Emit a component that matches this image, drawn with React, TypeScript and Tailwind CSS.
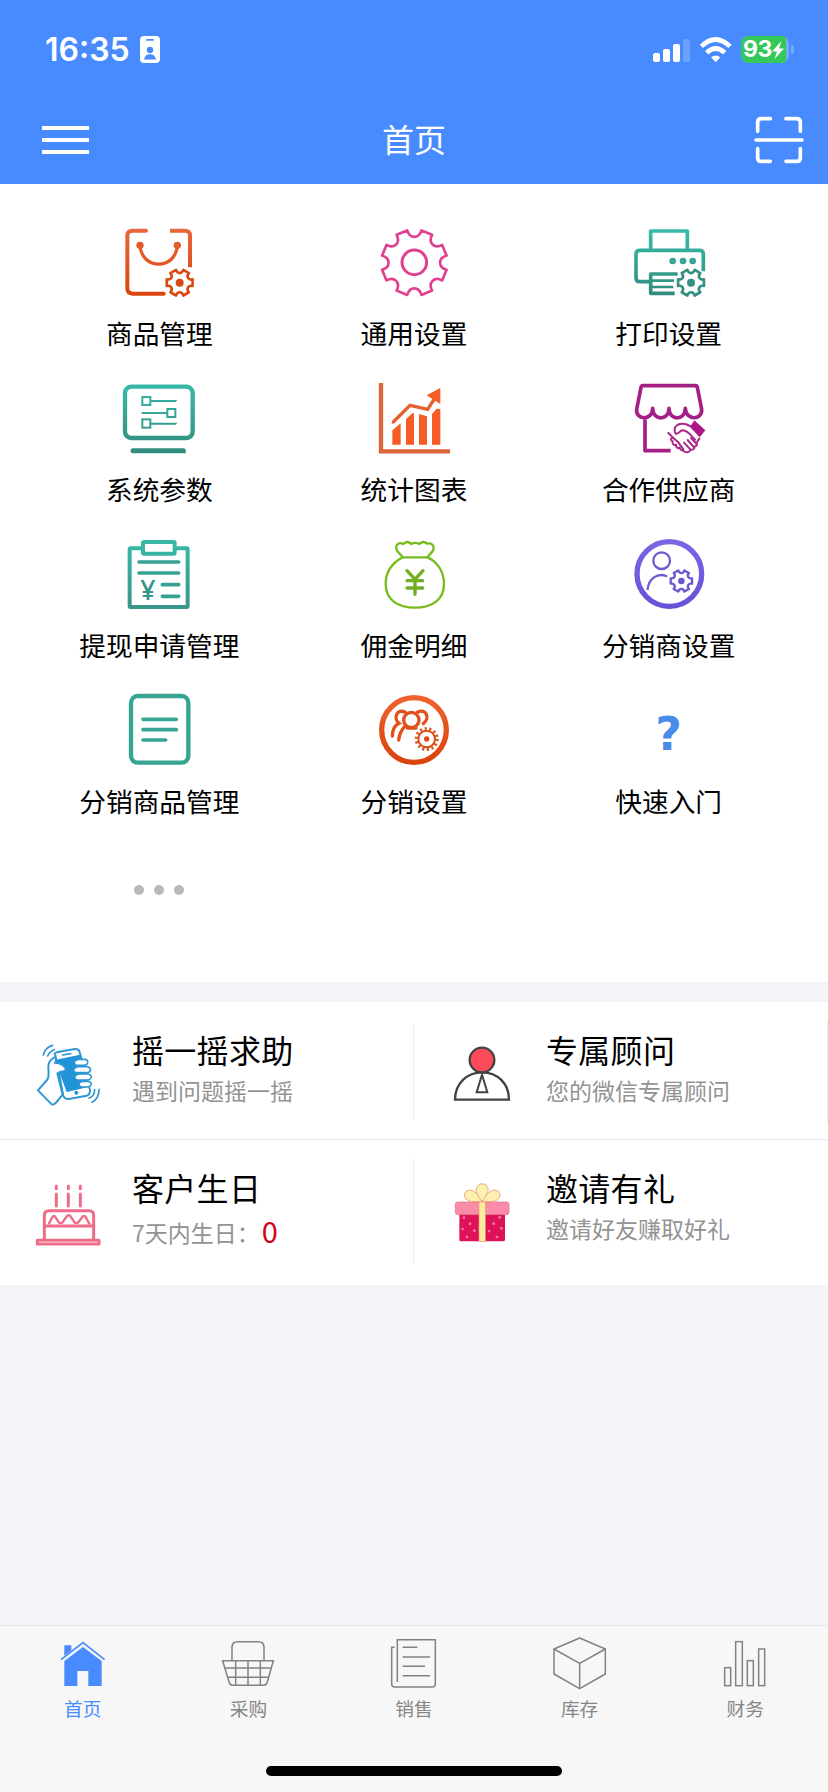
import type { ReactNode } from 'react';

interface EntryItem {
  label: string;
  icon: ReactNode;
}

interface GearProps {
  cx: number;
  cy: number;
  r: number;
  teeth: number;
  toothHalf: number;
  depth: number;
}

// Outline of a cog whose valleys (not teeth) point straight up
function gearPath({ cx, cy, r, teeth, toothHalf, depth }: GearProps) {
  const at = (deg: number, radius: number) => {
    const a = (deg * Math.PI) / 180;
    return `${(cx + radius * Math.sin(a)).toFixed(1)} ${(cy - radius * Math.cos(a)).toFixed(1)}`;
  };
  const step = 360 / teeth;
  let d = '';
  for (let i = 0; i < teeth; i++) {
    const mid = step / 2 + i * step;
    const next = mid + step;
    d += `${i === 0 ? 'M' : 'L'}${at(mid - toothHalf, r)} L${at(mid + toothHalf, r)} `;
    d += `C${at(mid + toothHalf + 2, r - depth)} ${at(next - toothHalf - 2, r - depth)} ${at(next - toothHalf, r)} `;
  }
  return d + 'Z';
}

function Gradient({ id, from, to, y1, y2 }: { id: string; from: string; to: string; y1: number; y2: number }) {
  return (
    <defs>
      <linearGradient id={id} gradientUnits="userSpaceOnUse" x1="0" x2="0" y1={y1} y2={y2}>
        <stop offset="0" stopColor={from} />
        <stop offset="1" stopColor={to} />
      </linearGradient>
    </defs>
  );
}

function SmallGear({ cx, cy, r, color, width }: { cx: number; cy: number; r: number; color: string; width: number }) {
  return (
    <>
      <path
        d={gearPath({ cx, cy, r, teeth: 6, toothHalf: 14, depth: r * 0.34 })}
        fill="none"
        stroke={color}
        strokeWidth={width}
        strokeLinejoin="round"
      />
      <circle cx={cx} cy={cy} r={r * 0.3} fill={color} />
    </>
  );
}

const entries: EntryItem[] = [
  {
    label: '商品管理',
    icon: (
      <svg viewBox="178 36 240 240" className="size-20" fill="none" strokeLinecap="round">
        <Gradient id="goods" from="#ea673c" to="#d8430c" y1={56} y2={260} />
        <g stroke="url(#goods)" strokeWidth="12">
          <path d="M259 62H218Q203 62 203 77V235Q203 251 219 251H312" />
          <path d="M331 62H376Q391 62 391 77V172" strokeLinecap="butt" />
          <path d="M241 106C246 181 348 181 353 106" strokeWidth="10" />
        </g>
        <circle cx="241" cy="106" r="11" fill="#e35a2b" />
        <circle cx="353" cy="106" r="11" fill="#e35a2b" />
        <SmallGear cx={360} cy={218} r={40} color="#db4913" width={8} />
      </svg>
    ),
  },
  {
    label: '通用设置',
    icon: (
      <svg viewBox="942 36 240 240" className="size-20" fill="none" stroke="#e0408f" strokeLinejoin="round">
        <path d={gearPath({ cx: 1063, cy: 158, r: 99, teeth: 8, toothHalf: 10, depth: 27 })} strokeWidth="8" />
        <circle cx="1063" cy="157" r="37" strokeWidth="9" />
      </svg>
    ),
  },
  {
    label: '打印设置',
    icon: (
      <svg viewBox="566 36 240 240" className="size-20" fill="none">
        <Gradient id="printer" from="#37bba9" to="#328a7d" y1={58} y2={260} />
        <g stroke="url(#printer)" strokeWidth="11" strokeLinejoin="round">
          <path d="M631 118V63H741V118" />
          <path d="M627 215H599Q587 215 587 203V133Q587 121 599 121H777Q789 121 789 133V184" />
          <path d="M712 192H631V250H703" />
          <path d="M634 212H701M634 231H699" strokeWidth="8" />
        </g>
        <g fill="#36a596">
          <circle cx="697" cy="153" r="10" />
          <circle cx="728" cy="153" r="10" />
          <circle cx="757" cy="153" r="10" />
        </g>
        <SmallGear cx={752} cy={218} r={40} color="#338f82" width={8} />
      </svg>
    ),
  },
  {
    label: '系统参数',
    icon: (
      <svg viewBox="178 504 240 240" className="size-20" fill="none">
        <Gradient id="system" from="#37b9a8" to="#328b7e" y1={524} y2={730} />
        <g stroke="url(#system)">
          <rect x="196" y="530" width="203" height="154" rx="19" strokeWidth="13" />
          <path d="M220 722.5H371V722" strokeWidth="15" strokeLinecap="round" />
          <g strokeWidth="6">
            <rect x="248" y="561" width="24" height="24" />
            <rect x="323" y="597" width="24" height="24" />
            <rect x="248" y="628" width="24" height="25" />
            <path d="M273 573H349V573.1M246 609H322V609.1M273 641H349V641.1" />
          </g>
        </g>
      </svg>
    ),
  },
  {
    label: '统计图表',
    icon: (
      <svg viewBox="942 504 240 240" className="size-20" fill="#f65c25">
        <path d="M963 519V724H1170" fill="none" stroke="#dc653c" strokeWidth="13" />
        <path d="M1000 636L1050 586L1103 598L1126 562" fill="none" stroke="#e6602f" strokeWidth="10" strokeLinecap="round" />
        <path d="M1141 534V582L1100 556Z" />
        <path d="M997 661L1022 640V704H997Z" />
        <path d="M1038 627L1058 609L1062 610V704H1038Z" />
        <path d="M1077 612L1101 619V704H1077Z" />
        <path d="M1116 612L1130 596L1141 597V704H1116Z" />
      </svg>
    ),
  },
  {
    label: '合作供应商',
    icon: (
      <svg viewBox="566 504 240 240" className="size-20" fill="none" strokeLinejoin="round" strokeLinecap="round">
        <g stroke="#a52086" strokeWidth="11">
          <path d="M608 527H765Q770 527 771 532L784 598C786 631 737 633 735 595C735 633 686 633 686 595C686 633 637 633 637 595C637 633 586 631 589 598L602 532Q603 527 608 527Z" />
          <path d="M614 628V722H691" strokeLinecap="butt" />
        </g>
        <path d="M762 631L795 661L778 682L749 651Z" fill="#ad1689" />
        <g stroke="#a8288a" strokeWidth="6">
          <path d="M749 648C738 642 722 640 711 645C700 652 702 666 706 671C714 673 718 662 727 661C742 661 752 676 764 689" />
          <path d="M684 669L698 683C690 684 690 692 697 694C694 703 702 706 707 704C706 713 713 716 718 713C720 723 728 722 729 717" />
          <path d="M698 683L714 697L727 715" />
          <path d="M731 698L750 718M742 690L761 712M752 684L769 702" />
          <path d="M728 722C738 730 748 727 750 719C758 721 764 715 761 710C768 710 772 704 768 699L777 686" />
        </g>
      </svg>
    ),
  },
  {
    label: '提现申请管理',
    icon: (
      <svg viewBox="178 42 240 240" className="size-20" fill="none">
        <Gradient id="withdraw" from="#37b9a8" to="#38968a" y1={60} y2={266} />
        <g stroke="url(#withdraw)" strokeWidth="12" strokeLinejoin="round">
          <rect x="210" y="85" width="174" height="176" rx="3" />
          <rect x="250" y="66" width="95" height="35" rx="3" fill="#fff" />
        </g>
        <path d="M238 126H357M238 159H357M308 194H357M308 229H357" stroke="#37a193" strokeWidth="11" strokeLinecap="round" />
        <text x="265" y="241" textAnchor="middle" fontSize="80" fill="#37978a" className="font-['Noto_Sans'] font-medium">
          ¥
        </text>
      </svg>
    ),
  },
  {
    label: '佣金明细',
    icon: (
      <svg viewBox="942 42 240 240" className="size-20" fill="none" stroke="#76bb1c" strokeWidth="7" strokeLinejoin="round">
        <path d="M1028 112H1103C1135 128 1152 158 1152 192C1152 240 1115 263 1065 263C1015 263 977 240 977 192C977 158 995 130 1028 112Z" />
        <path d="M1028 112C1020 98 1005 95 1009 78Q1014 65 1030 72Q1042 60 1054 72Q1066 65 1078 72Q1090 60 1101 71Q1118 67 1121 82C1122 98 1108 100 1103 112" />
        <path
          d="M1041 152L1065 178L1089 152M1065 178V223M1041 182H1088M1041 204H1088"
          stroke="#72ae22"
          strokeWidth="10"
          strokeLinecap="round"
        />
      </svg>
    ),
  },
  {
    label: '分销商设置',
    icon: (
      <svg viewBox="566 42 240 240" className="size-20" fill="none" strokeLinecap="round">
        <Gradient id="dealer" from="#7a66e6" to="#6552d8" y1={58} y2={266} />
        <circle cx="687" cy="162" r="97" stroke="url(#dealer)" strokeWidth="16" />
        <circle cx="664" cy="122" r="25" stroke="#6c5cd0" strokeWidth="7" />
        <path d="M622 207C626 176 650 158 678 168" stroke="#6c5cd0" strokeWidth="7" />
        <SmallGear cx={723} cy={183} r={33} color="#6857cf" width={7} />
      </svg>
    ),
  },
  {
    label: '分销商品管理',
    icon: (
      <svg viewBox="178 510 240 240" className="size-20" fill="none" stroke="#36a693">
        <rect x="214" y="528" width="172" height="200" rx="20" strokeWidth="13" />
        <path d="M250 598H350M250 629H350M250 660H318" strokeWidth="11" strokeLinecap="round" />
      </svg>
    ),
  },
  {
    label: '分销设置',
    icon: (
      <svg viewBox="942 510 240 240" className="size-20" fill="none" strokeLinecap="round">
        <Gradient id="dist" from="#f2622e" to="#d8430a" y1={526} y2={734} />
        <circle cx="1062" cy="630" r="97" stroke="url(#dist)" strokeWidth="16" />
        <g stroke="#e2501c" strokeWidth="10">
          <circle cx="1054" cy="600" r="23" />
          <path d="M1036 577C1012 564 998 594 1017 610C1003 617 997 632 997 648" />
          <path d="M1072 577C1098 564 1112 594 1090 611" />
          <path d="M1034 620C1022 632 1018 644 1016 660" />
          <path d="M1042 624L1068 624" />
        </g>
        <circle cx="1100" cy="657" r="25" stroke="#dc4b15" strokeWidth="6" />
        <circle
          cx="1100"
          cy="657"
          r="31.500"
          stroke="#dc4b15"
          strokeWidth="9"
          strokeLinecap="butt"
          strokeDasharray="6 8.137"
        />
        <circle cx="1100" cy="657" r="8" fill="#dc4b15" />
      </svg>
    ),
  },
  {
    label: '快速入门',
    icon: (
      <span className="flex size-20 items-center justify-center pt-2 font-['DejaVu_Sans'] text-[46px] leading-none font-bold text-[#4a8ae8]">
        ?
      </span>
    ),
  },
];

const tabGray = '#828282';

interface Service {
  title: string;
  desc: string;
  count?: number;
  icon: ReactNode;
}

const services: Service[] = [
  {
    title: '摇一摇求助',
    desc: '遇到问题摇一摇',
    icon: (
      <svg viewBox="84 585 240 240" className="size-20" fill="#fff" stroke="#2e97d6" strokeLinecap="round" strokeLinejoin="round">
        <path d="M166 645Q160 640 170 637L224 627Q236 626 239 636L270 750Q271 763 260 767L206 777Q194 778 190 768Z" strokeWidth="6" />
        <path d="M164 660L240 644L262 742L200 756Z" fill="#2393d8" stroke="none" />
        <path d="M188 645L212 641" strokeWidth="5" />
        <circle cx="229" cy="758" r="6" fill="#2393d8" stroke="none" />
        <path
          d="M164 652C150 658 144 668 145 684C146 702 148 712 141 720L114 751L155 793Q161 795 167 789L188 764L172 700C180 692 186 698 198 690C196 678 182 668 164 668"
          strokeWidth="6"
        />
        <g strokeWidth="5">
          <path d="M238 658H256Q266 661 262 671Q258 677 246 676H230Q220 672 224 664Q228 658 238 658Z" />
          <path d="M236 680H262Q274 683 271 692Q268 699 256 698H228Q219 695 222 687Q226 680 236 680Z" />
          <path d="M240 702H264Q276 705 273 714Q270 720 258 720H232Q222 716 225 709Q229 702 240 702Z" />
          <path d="M248 724H266Q276 727 273 735Q270 741 260 741H244Q235 738 237 731Q240 724 248 724Z" />
        </g>
        <path d="M130 645Q134 623 158 616M143 648Q147 635 163 629M297 748Q297 777 276 787M284 749Q284 768 267 774" fill="none" strokeWidth="5" />
      </svg>
    ),
  },
  {
    title: '专属顾问',
    desc: '您的微信专属顾问',
    icon: (
      <svg viewBox="84 195 240 240" className="size-20" fill="none" stroke="#424242" strokeWidth="7">
        <path d="M123 389C123 340 160 307 204 307C250 307 285 340 285 389Z" />
        <circle cx="204" cy="270" r="37" fill="#ff4b59" />
        <path d="M204 314L188 367H220Z" strokeWidth="6" />
      </svg>
    ),
  },
  {
    title: '客户生日',
    desc: '7天内生日：',
    count: 0,
    icon: (
      <svg viewBox="84 132 240 240" className="size-20" fill="none" stroke="#ee6c88" strokeWidth="9" strokeLinejoin="round">
        <path d="M133 332V259Q133 245 147 245H267Q281 245 281 259V332" />
        <path d="M133 291H281" />
        <rect x="112" y="334" width="185" height="11" />
        <path
          d="M146 286L157 264Q161 258 166 264L175 278Q182 287 189 278L201 261Q206 256 211 261L222 278Q229 287 236 278L247 264Q252 258 257 264L269 286"
          strokeWidth="7"
        />
        <g strokeLinecap="round">
          <path d="M169 195V231M205 195V231M241 195V231" />
          <path d="M169 171V179M205 171V179M241 171V179" />
        </g>
      </svg>
    ),
  },
  {
    title: '邀请有礼',
    desc: '邀请好友赚取好礼',
    icon: (
      <svg viewBox="84 610 240 240" className="size-20">
        <rect x="136" y="730" width="137" height="85" rx="5" fill="#df1259" />
        <g fill="#f47fa8">
          <circle cx="150" cy="744" r="4" />
          <circle cx="168" cy="762" r="4" />
          <circle cx="146" cy="778" r="4" />
          <circle cx="181" cy="783" r="4" />
          <circle cx="159" cy="802" r="4" />
          <circle cx="257" cy="743" r="4" />
          <circle cx="239" cy="762" r="4" />
          <circle cx="262" cy="776" r="4" />
          <circle cx="225" cy="784" r="4" />
          <circle cx="249" cy="802" r="4" />
        </g>
        <rect x="124" y="697" width="161" height="38" rx="7" fill="#fa8ba9" stroke="#d7718c" strokeWidth="2" />
        <rect x="195" y="697" width="19" height="118" fill="#fdec9c" stroke="#e9a070" strokeWidth="2" />
        <g fill="#fdefae" stroke="#eda888" strokeWidth="3">
          <path d="M204 695C195 672 172 653 156 665C143 680 158 697 180 696Z" />
          <path d="M205 695C214 672 237 653 253 665C266 680 251 697 229 696Z" />
          <path d="M204 695C192 680 184 668 187 656C191 638 219 638 222 656C224 668 216 680 204 695Z" />
        </g>
      </svg>
    ),
  },
];

const tabs: EntryItem[] = [
  {
    label: '首页',
    icon: (
      <svg viewBox="164 78 168 168" className="size-14" fill="#488bff">
        <path d="M192 106H213V121L192 137Z" />
        <path d="M182 149L248 98L313 149" fill="none" stroke="#488bff" strokeWidth="5" />
        <path d="M192 153L248 111L304 153V228H264V183H231V228H192Z" />
      </svg>
    ),
  },
  {
    label: '采购',
    icon: (
      <svg viewBox="661 78 168 168" className="size-14" fill="none" stroke={tabGray} strokeWidth="4.500">
        <path d="M697 150V112Q697 95 714 95H776Q793 95 793 112V150" />
        <path d="M669 152H821L803 216Q800 226 791 226H700Q691 226 688 216Z" />
        <path d="M708 152V226M745 152V226M782 152V226M675 174H816M684 202H807" />
      </svg>
    ),
  },
  {
    label: '销售',
    icon: (
      <svg viewBox="1158 78 168 168" className="size-14" fill="none" stroke={tabGray} strokeWidth="4.500">
        <path d="M1192 216V89H1306V222Q1306 231 1297 231H1184Q1175 231 1175 222V112H1184" />
        <path d="M1208 112H1252M1208 141H1290M1208 169H1275M1208 197H1290" />
      </svg>
    ),
  },
  {
    label: '库存',
    icon: (
      <svg viewBox="413 78 168 168" className="size-14" fill="none" stroke={tabGray} strokeWidth="4.500" strokeLinejoin="round">
        <path d="M496 84L573 117V192L496 236L419 192V117Z" />
        <path d="M419 117L496 160L573 117M496 160V236" />
      </svg>
    ),
  },
  {
    label: '财务',
    icon: (
      <svg viewBox="909 78 168 168" className="size-14" fill="none" stroke={tabGray} strokeWidth="4.500">
        <rect x="932" y="173" width="18" height="54" />
        <rect x="965" y="95" width="20" height="132" />
        <rect x="1000" y="152" width="18" height="75" />
        <rect x="1034" y="117" width="18" height="110" />
      </svg>
    ),
  },
];

function StatusBar() {
  return (
    <div className="flex h-24 items-center justify-between pt-[3px] pr-[34px] pl-[45px]">
      <div className="flex items-center gap-2.5">
        <span className="w-[85px] font-['Inter'] text-[32px] leading-none font-semibold whitespace-nowrap">16:35</span>
        <svg viewBox="0 0 20 27" className="h-[27px] w-5">
          <rect width="20" height="27" rx="4" fill="#fff" />
          <rect x="6" y="3" width="8" height="1.800" rx=".9" fill="#488bff" />
          <circle cx="10" cy="14" r="3.200" fill="#488bff" />
          <path d="M4 23.500Q5 18.300 10 18.300Q15 18.300 16 23.500Z" fill="#488bff" />
        </svg>
      </div>
      <div className="flex items-center">
        <svg viewBox="0 0 38 24" className="h-6 w-[38px]" fill="#fff">
          <rect x="0" y="15" width="7" height="9" rx="2" />
          <rect x="10" y="11" width="7" height="13" rx="2" />
          <rect x="20" y="6" width="7" height="18" rx="2" />
          <rect x="30" y="1" width="7" height="23" rx="2" opacity=".2" />
        </svg>
        <svg viewBox="857 108 96 78" className="ml-[9px] h-[26px] w-8" fill="none" stroke="#fff" strokeWidth="14">
          <path d="M861 136Q904 95 947 136" />
          <path d="M877 155Q904 130 931 155" />
          <path d="M904 184L890 169Q904 158 918 169Z" fill="#fff" stroke="none" />
        </svg>
        <div className="ml-[9px] flex h-[27px] w-12 overflow-hidden rounded-[8px] bg-[#76abf8]">
          <div className="flex w-[45px] items-center justify-center bg-[#34c759]">
            <span className="font-['Inter'] text-[23px] leading-none font-bold tracking-[-0.5px]">93</span>
            <svg viewBox="0 0 12 18" className="h-[18px] w-3" fill="#fff">
              <path d="M9.500 0L0 10.500H5L2.500 18L12 7.500H7Z" />
            </svg>
          </div>
        </div>
        <div className="ml-0.5 h-[9px] w-[3px] rounded-r-full bg-[#76abf8]" />
      </div>
    </div>
  );
}

function NavBar() {
  return (
    <div className="flex h-[88px] items-center pr-6 pl-[42px]">
      <div className="flex flex-1">
        <div className="flex flex-col gap-2">
          <span className="h-1 w-[47px] bg-white" />
          <span className="h-1 w-[47px] bg-white" />
          <span className="h-1 w-[47px] bg-white" />
        </div>
      </div>
      <h1 className="mr-[18px] mb-1 text-[32px] leading-none">首页</h1>
      <div className="flex flex-1 justify-end">
        <svg viewBox="1017 345 150 150" className="size-[50px]" fill="none" stroke="#fff" strokeWidth="11" strokeLinecap="round">
          <path d="M1066 356H1039Q1028 356 1028 367V394M1113 356H1145Q1156 356 1156 367V394M1028 446V473Q1028 484 1039 484H1066M1113 484H1145Q1156 484 1156 473V446" />
          <path d="M1023 420H1161" />
        </svg>
      </div>
    </div>
  );
}

function ServiceCard({ service, divider }: { service: Service; divider: string }) {
  return (
    <div className="flex w-1/2 items-start">
      <div className="mt-[33px] ml-7 shrink-0">{service.icon}</div>
      <div className="mt-[25px] ml-6 flex-1 whitespace-nowrap">
        <h2 className="text-[32px] leading-[44px] tracking-[0.3px] text-black">{service.title}</h2>
        {service.count === undefined ? (
          <p className="mt-[3px] text-[23px] leading-8 text-[#939393]">{service.desc}</p>
        ) : (
          <p className="mt-[7px] flex items-center text-[23px] leading-8 text-[#939393]">
            {service.desc}
            <span className="-mt-1 ml-0.5 text-[29px] text-[#d0021b]">{service.count}</span>
          </p>
        )}
      </div>
      <div className={divider} />
    </div>
  );
}

export default function App() {
  return (
    <div className="flex h-[1792px] w-[828px] flex-col overflow-hidden bg-[#f3f3f8] font-['Noto_Sans_CJK_SC',sans-serif]">
      <header className="h-[184px] shrink-0 bg-[#488bff] text-white">
        <StatusBar />
        <NavBar />
      </header>

      <main className="flex-1">
        <section className="grid h-[798px] auto-rows-[156px] grid-cols-3 bg-white px-8 pt-[38px]">
          {entries.map((entry) => (
            <div key={entry.label} className="flex flex-col items-center">
              {entry.icon}
              <span className="mt-[13px] text-[26.7px] leading-9 whitespace-nowrap text-black">{entry.label}</span>
            </div>
          ))}
          <div className="flex justify-center gap-2.5 pt-[39px]">
            <span className="size-2.5 rounded-full bg-[#b9b9b9]" />
            <span className="size-2.5 rounded-full bg-[#b9b9b9]" />
            <span className="size-2.5 rounded-full bg-[#b9b9b9]" />
          </div>
        </section>

        <section className="mt-5 bg-white">
          <div className="flex h-[138px] border-b border-[#ebebee]">
            <ServiceCard service={services[0]} divider="mt-[22px] h-24 w-px bg-[#ececef]" />
            <ServiceCard service={services[1]} divider="mt-[18px] h-[104px] w-px bg-[#ececef]" />
          </div>
          <div className="flex h-[145px]">
            <ServiceCard service={services[2]} divider="mt-[19px] h-[105px] w-px bg-[#ececef]" />
            <ServiceCard service={services[3]} divider="w-px" />
          </div>
        </section>
      </main>

      <footer className="flex h-[167px] shrink-0 flex-col border-t border-[#e1e1e8] bg-[#f7f7f7]">
        <nav className="grid grid-cols-5 pt-2.5">
          {tabs.map((tab, i) => (
            <div key={tab.label} className="flex flex-col items-center">
              {tab.icon}
              <span className={`mt-[3px] text-[18.7px] leading-[26px] ${i === 0 ? 'text-[#488bff]' : 'text-[#868686]'}`}>
                {tab.label}
              </span>
            </div>
          ))}
        </nav>
        <div className="mx-auto mt-auto mb-4 h-2.5 w-[296px] rounded-full bg-black" />
      </footer>
    </div>
  );
}
